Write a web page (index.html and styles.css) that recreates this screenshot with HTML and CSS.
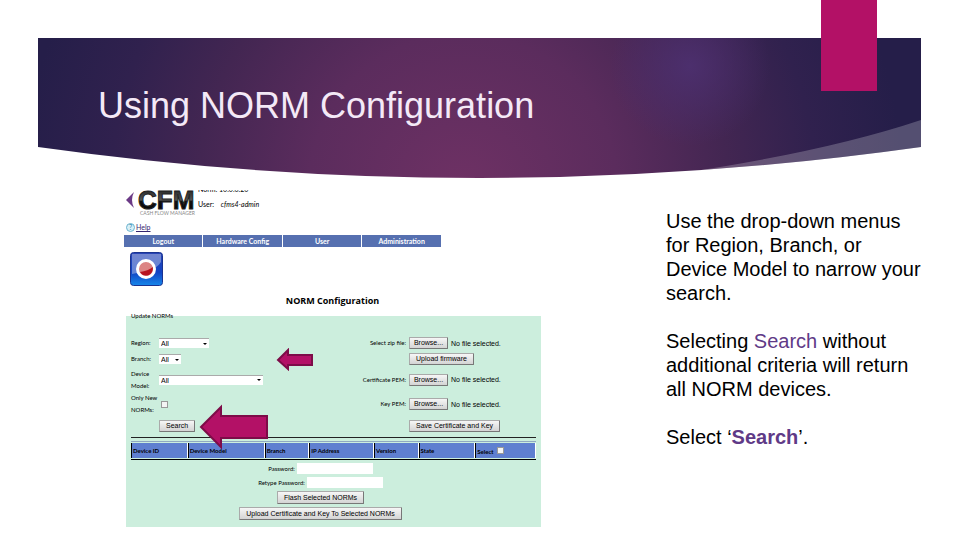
FILE: index.html
```html
<!DOCTYPE html>
<html lang="en">
<head>
  <meta charset="UTF-8" />
  <meta name="viewport" content="width=device-width, initial-scale=1.0" />
  <title>Using NORM Configuration</title>
  <link rel="stylesheet" href="styles.css">
</head>
<body>
  <header class="banner">
    <svg class="banner-bg" viewBox="0 0 883 140" preserveAspectRatio="none" aria-hidden="true">
      <defs>
        <radialGradient id="glow" gradientUnits="userSpaceOnUse" cx="425" cy="150" r="440">
          <stop offset="0" stop-color="#6e3164" />
          <stop offset="0.35" stop-color="#5b2c5d" />
          <stop offset="0.6" stop-color="#432652" />
          <stop offset="0.8" stop-color="#30214e" />
          <stop offset="1" stop-color="#251e49" />
        </radialGradient>
        <radialGradient id="spot" gradientUnits="userSpaceOnUse" cx="652" cy="28" r="80">
          <stop offset="0" stop-color="#4d3070" stop-opacity="0.9" />
          <stop offset="1" stop-color="#4a2e70" stop-opacity="0" />
        </radialGradient>
        <clipPath id="shape">
          <path d="M0 0H883V109Q441 171 0 109Z" />
        </clipPath>
      </defs>
      <g clip-path="url(#shape)">
        <path d="M0 0H883V140H0Z" fill="url(#glow)" />
        <path d="M560 0H740V120H560Z" fill="url(#spot)" />
        <path d="M883 82Q790 113 650 134V140H883Z" fill="#fff" fill-opacity="0.22" />
      </g>
    </svg>
    <h1>Using NORM Configuration</h1>
  </header>
  <div class="ribbon"></div>

  <main class="content">
    <section class="app">
      <div class="app-head">
        <svg class="logo" viewBox="0 0 70 26" role="img" aria-label="CFM Cash Flow Manager">
          <defs>
            <linearGradient id="metal" x1="0" y1="0" x2="0" y2="1">
              <stop offset="0" stop-color="#111" />
              <stop offset="0.5" stop-color="#555" />
              <stop offset="0.55" stop-color="#111" />
              <stop offset="1" stop-color="#000" />
            </linearGradient>
          </defs>
          <path d="M8 2Q4 10 8 18L0 10Z" fill="#6b3a86" />
          <text class="logo-name" x="12" y="19" fill="url(#metal)" stroke="#222">CFM</text>
          <text class="logo-sub" x="14" y="25">CASH FLOW MANAGER</text>
        </svg>
        <div class="session">
          <div class="clipped"><span>Norm: 10.0.0.20</span></div>
          <div class="user">User: <em>cfms4-admin</em></div>
        </div>
      </div>

      <a class="help" href="#"><span class="help-icon">?</span><u>Help</u></a>

      <nav class="menu">
        <a href="#">Logout</a>
        <a href="#">Hardware Config</a>
        <a href="#">User</a>
        <a href="#">Administration</a>
      </nav>

      <svg class="record" viewBox="0 0 33 34" aria-hidden="true">
        <defs>
          <linearGradient id="blue" x1="0" y1="0" x2="0" y2="1">
            <stop offset="0" stop-color="#2a45b4" />
            <stop offset="0.6" stop-color="#1244c4" />
            <stop offset="1" stop-color="#1687ea" />
          </linearGradient>
        </defs>
        <rect x="0.5" y="0.5" width="32" height="33" rx="3" fill="url(#blue)" stroke="#1a3390" />
        <path d="M2 2H31V10Q27 17 16 19Q8 21 2 22Z" fill="#fff" fill-opacity="0.35" />
        <circle cx="16" cy="17" r="8.5" fill="#dc8484" stroke="#fff" stroke-width="3" />
        <path d="M10 20Q18 19 23 15Q23 21 19 23Q13 25 10 20Z" fill="#b81420" />
      </svg>

      <h2>NORM Configuration</h2>

      <form class="panel">
        <div class="legend">Update NORMs</div>
        <div class="fields">
          <label for="region">Region:</label>
          <select id="region" class="region"><option>All</option></select>
          <label class="right" for="zip">Select zip file:</label>
          <div><button type="button" id="zip" class="browse">Browse...</button><span class="file">No file selected.</span></div>

          <label for="branch">Branch:</label>
          <select id="branch" class="branch"><option>All</option></select>
          <span></span>
          <div><button type="button">Upload firmware</button></div>

          <label for="model">Device<br>Model:</label>
          <select id="model" class="model"><option>All</option></select>
          <label class="right" for="cert">Certificate PEM:</label>
          <div><button type="button" id="cert" class="browse">Browse...</button><span class="file">No file selected.</span></div>

          <label for="only-new">Only New<br>NORMs:</label>
          <input type="checkbox" id="only-new">
          <label class="right" for="key">Key PEM:</label>
          <div><button type="button" id="key" class="browse">Browse...</button><span class="file">No file selected.</span></div>

          <span></span>
          <div><button type="button">Search</button></div>
          <span></span>
          <div><button type="button">Save Certificate and Key</button></div>
        </div>

        <table class="devices">
          <colgroup>
            <col class="w-id"><col class="w-model"><col class="w-branch"><col class="w-ip">
            <col class="w-version"><col class="w-state"><col class="w-select">
          </colgroup>
          <tr>
            <th>Device ID</th>
            <th>Device Model</th>
            <th>Branch</th>
            <th>IP Address</th>
            <th>Version</th>
            <th>State</th>
            <th><label for="select-all">Select</label> <input type="checkbox" id="select-all"></th>
          </tr>
        </table>

        <div class="actions">
          <div><label for="password">Password:</label> <input type="password" id="password"></div>
          <div><label for="retype">Retype Password:</label> <input type="password" id="retype"></div>
          <button type="button">Flash Selected NORMs</button>
          <button type="button">Upload Certificate and Key To Selected NORMs</button>
        </div>

        <svg class="arrow arrow-small" viewBox="0 0 37 23" aria-hidden="true">
          <path d="M2 12L12 2V7H36V17H12V21Z" />
        </svg>
        <svg class="arrow arrow-big" viewBox="0 0 70 46" aria-hidden="true">
          <path d="M2 23L22 3V12H68V34H22V43Z" />
        </svg>
      </form>
    </section>

    <section class="notes">
      <p>Use the drop-down menus for Region, Branch, or Device Model to narrow your search.</p>
      <p>Selecting <span class="accent">Search</span> without additional criteria will return all NORM devices.</p>
      <p>Select ‘<b class="accent">Search</b>’.</p>
    </section>
  </main>
</body>
</html>
```
FILE: styles.css
```css
* {
  box-sizing: border-box;
}
body {
  margin: 0;
  background: #fff;
  color: #000;
  font-family: "Liberation Sans", Arial, sans-serif;
}

/* Title banner */
.banner {
  position: relative;
  height: 140px;
  margin: 38px 39px 0 38px;
  padding: 48px 60px 0;
}
.banner-bg {
  position: absolute;
  top: 0;
  left: 0;
  width: 100%;
  height: 100%;
}
.banner h1 {
  position: relative;
  margin: 0;
  color: #f4e9f7;
  font-size: 36px;
  line-height: 40px;
  font-weight: normal;
}
.ribbon {
  position: absolute;
  top: 0;
  right: 83px;
  width: 56px;
  height: 91px;
  background: #b31166;
}

.content {
  display: grid;
  grid-template-columns: 1fr 260px;
  column-gap: 125px;
  padding: 12px 34px 14px 124px;
}

/* Configuration screen */
.app {
  font-family: Lato, "Open Sans", sans-serif;
  font-size: 6px;
}
.app-head {
  display: flex;
  gap: 2px;
  height: 30px;
  padding-left: 2px;
}
.logo {
  width: 70px;
  height: 26px;
}
.logo-name {
  font: bold 26px "Liberation Sans", sans-serif;
}
.logo-sub {
  font: 5px Lato, sans-serif;
  fill: #888;
}
.clipped {
  display: flex;
  align-items: flex-end;
  height: 2px;
  overflow: hidden;
  font-size: 7px;
  line-height: 6px;
}
.user {
  margin-top: 7px;
  font-size: 7px;
  line-height: 10px;
}
.user em {
  margin-left: 5px;
}
.help {
  display: flex;
  align-items: center;
  gap: 1px;
  height: 14px;
  padding-left: 2px;
  color: #35256e;
  font-size: 7px;
  text-decoration: none;
}
.help-icon {
  width: 9px;
  height: 9px;
  border: 1px solid #6cb4d0;
  border-radius: 50%;
  background: #d8f0f8;
  color: #2a83a8;
  line-height: 7px;
  text-align: center;
}
.menu {
  display: grid;
  grid-template-columns: repeat(4, 1fr);
  gap: 1px;
  width: 76%;
  height: 12px;
  margin-top: 1px;
}
.menu a {
  background: #5670b0;
  color: #fff;
  font-size: 7px;
  font-weight: bold;
  line-height: 12px;
  text-align: center;
  text-decoration: none;
}
.record {
  display: block;
  width: 33px;
  height: 34px;
  margin: 5px 0 0 6px;
}
.app h2 {
  margin: 9px 0 0;
  font-family: "Open Sans", sans-serif;
  font-size: 9px;
  line-height: 12px;
  text-align: center;
}

.panel {
  position: relative;
  margin: 9px 0 0 2px;
  padding: 0 5px 7px;
  background: #cceedd;
}
.legend {
  height: 19px;
  line-height: 0;
}
.fields {
  display: grid;
  grid-template-columns: 28px 1fr 60px 127px;
  grid-template-rows: 16px 16px 25px 24px 20px;
  align-items: center;
  padding-bottom: 1px;
  border-bottom: 1px solid #222;
}
.fields label {
  line-height: 12px;
}
.fields .right {
  padding-right: 3px;
  text-align: right;
  white-space: nowrap;
}
.fields div {
  display: flex;
  align-items: center;
}

button,
select,
.file {
  font-family: "Liberation Sans", sans-serif;
  font-size: 7px;
}
button {
  height: 12px;
  padding: 0 6px;
  border: 1px solid #777;
  border-top-color: #aaa;
  border-left-color: #aaa;
  border-radius: 1px;
  background: linear-gradient(#f6f6f6, #d4d4d4);
  color: #000;
  line-height: 10px;
}
.browse {
  width: 39px;
  padding: 0;
}
.file {
  margin-left: 3px;
}
select {
  height: 10px;
  padding: 0 2px;
  border: 0;
  border-top: 1px solid #aaa;
  appearance: none;
  background: #fff url("data:image/svg+xml,%3Csvg xmlns='http://www.w3.org/2000/svg' viewBox='0 0 4 2'%3E%3Cpath d='M0 0H4L2 2Z'/%3E%3C/svg%3E") no-repeat right 2px center / 4px 2px;
}
.region {
  width: 50px;
}
.branch {
  width: 22px;
}
.model {
  width: 104px;
}
input[type="checkbox"] {
  width: 7px;
  height: 7px;
  margin: 0 0 0 2px;
  border: 1px solid #999;
  appearance: none;
  background: #f4f4f4;
}

.devices {
  width: 100%;
  margin-top: 3px;
  border-top: 1px solid #8fa8c0;
  border-bottom: 1px solid #000;
  border-spacing: 0 1px;
  table-layout: fixed;
}
.devices th {
  height: 15px;
  padding: 0 1px;
  border-left: 1px solid #000;
  border-right: 1px solid #fff;
  background: #5f7fd0;
  font-size: 6px;
  text-align: left;
  white-space: nowrap;
}
.w-id { width: 14%; }
.w-model { width: 19%; }
.w-branch { width: 11%; }
.w-ip { width: 16%; }
.w-version { width: 11%; }
.w-state { width: 14%; }
.w-select { width: 15%; }

.actions {
  display: flex;
  flex-direction: column;
  align-items: center;
  gap: 3px;
  padding: 3px 26px 0 0;
}
.actions div {
  display: flex;
  align-items: center;
  gap: 2px;
}
.actions input {
  width: 76px;
  height: 11px;
  padding: 0 2px;
  border: 0;
  background: #fff;
}
.actions button {
  height: 13px;
}

/* Pointers over the form */
.arrow {
  position: absolute;
  fill: #b31166;
  stroke: #7d0c48;
  stroke-width: 2;
}
.arrow-small {
  top: 32px;
  left: 150px;
  width: 37px;
  height: 23px;
}
.arrow-big {
  top: 88px;
  left: 73px;
  width: 70px;
  height: 46px;
}

/* Instructions */
.notes {
  padding-top: 19px;
  font-size: 20px;
  line-height: 24px;
}
.notes p {
  margin: 0 0 24px;
}
.accent {
  color: #5f3a87;
}
```
